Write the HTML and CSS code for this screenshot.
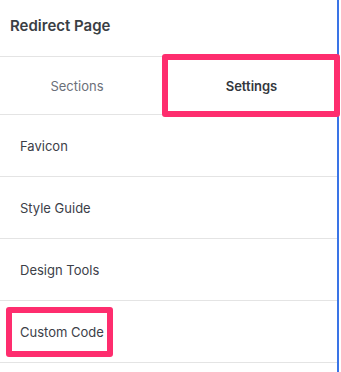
FILE: index.html
```html
<!DOCTYPE html>
<html>
<head>
	<title>Redirect Page</title>
	<link rel="stylesheet" href="styles.css">
</head>
<body>
	<div class="panel">
		<div class="header">Redirect Page</div>
		<div class="tabs">
			<div class="tab">Sections</div>
			<div class="tab active">Settings</div>
			<div class="mark mark-tab"></div>
		</div>
		<div class="list">
			<div class="item">Favicon</div>
			<div class="item">Style Guide</div>
			<div class="item">Design Tools</div>
			<div class="item">Custom Code
				<div class="mark mark-item"></div>
			</div>
		</div>
	</div>
</body>
</html>
```

FILE: styles.css
```css
* {
	margin: 0;
	padding: 0;
	box-sizing: border-box;
}
body {
	font-family: "Inter", "Noto Sans", sans-serif;
	background: #fff;
	width: 341px;
	height: 372px;
	overflow: hidden;
}
.panel {
	width: 339px;
	height: 372px;
	border-right: 2px solid #3a74e6;
	position: relative;
}
.header {
	height: 57px;
	padding-left: 10px;
	display: flex;
	align-items: center;
	font-size: 15px;
	font-weight: 600;
	color: #3a3e44;
	border-bottom: 1px solid #e4e4e4;
	padding-bottom: 5px;
}
.tabs {
	height: 58px;
	display: grid;
	grid-template-columns: 154px 1fr;
	column-gap: 12px;
	border-bottom: 1px solid #e4e4e4;
	position: relative;
}
.tab {
	display: flex;
	align-items: center;
	justify-content: center;
	font-size: 13px;
	color: #6b7079;
}
.tab.active {
	font-weight: 600;
	color: #33373d;
}
.item {
	height: 62px;
	display: flex;
	align-items: center;
	padding-left: 20px;
	font-size: 13px;
	color: #3c4048;
	border-bottom: 1px solid #e4e4e4;
	position: relative;
}
.mark {
	position: absolute;
	border: 6px solid #fe2d6e;
	border-radius: 3px;
	z-index: 2;
}
.mark-tab {
	left: 162px;
	top: -3px;
	width: 178px;
	height: 63px;
}
.mark-item {
	left: 6px;
	top: 6px;
	width: 107px;
	height: 50px;
}
```
